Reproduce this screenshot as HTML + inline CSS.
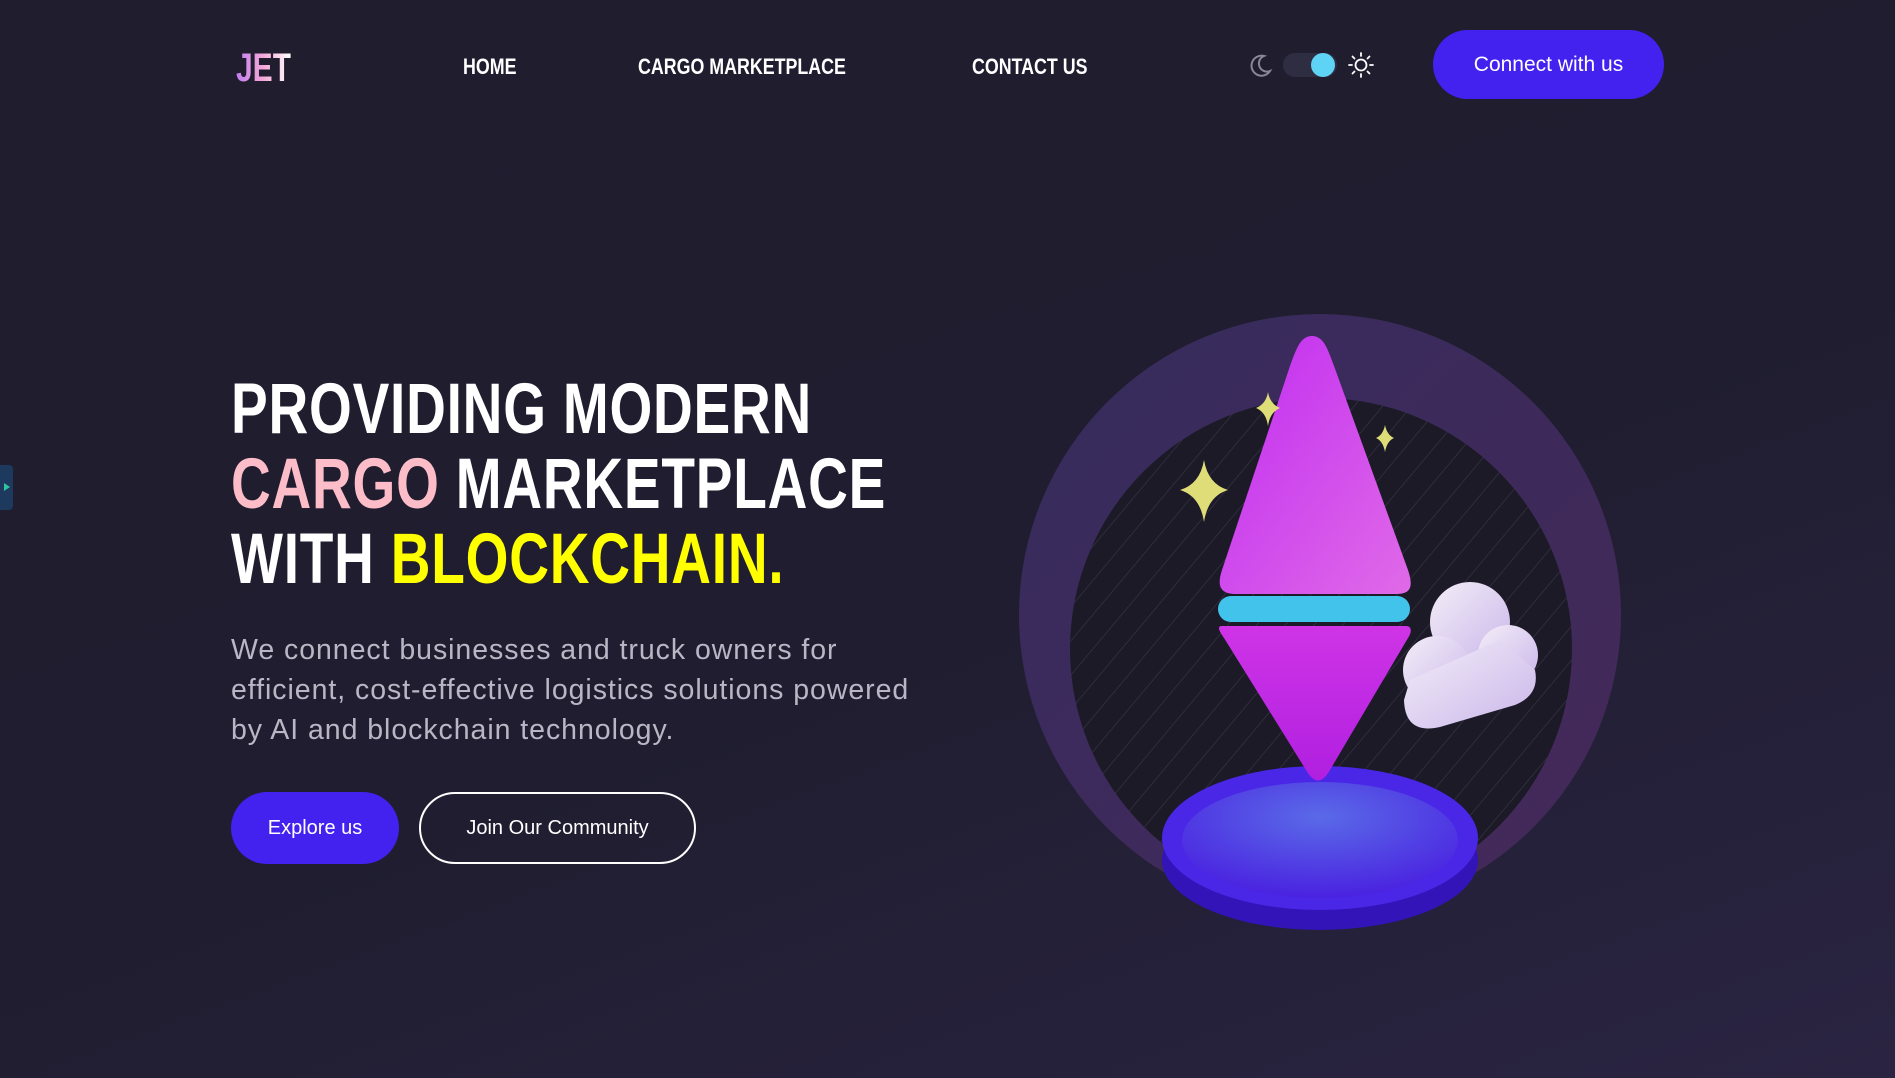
<!DOCTYPE html>
<html><head><meta charset="utf-8"><style>
*{margin:0;padding:0;box-sizing:border-box}
html,body{width:1895px;height:1078px;overflow:hidden}
body{background:linear-gradient(160deg,#1f1d2e 0%,#201d30 55%,#2a2442 100%);font-family:"Liberation Sans",sans-serif;position:relative;color:#fff}
.abs{position:absolute}
.logo{left:236px;top:46px;font-size:40px;font-weight:bold;transform:scaleX(.75);transform-origin:left;background:linear-gradient(90deg,#c07ef0,#f4a8d8,#fff);-webkit-background-clip:text;color:transparent}
.nav{top:54px;font-size:22px;font-weight:bold;transform:scaleX(.81);transform-origin:left;white-space:nowrap}
.btn1{left:1433px;top:30px;width:231px;height:69px;border-radius:35px;background:#4321ef;font-size:21px;display:flex;align-items:center;justify-content:center}
h1{position:absolute;left:231px;top:372px;font-size:71px;line-height:75px;font-weight:bold;white-space:nowrap;transform:scaleX(.775);transform-origin:left;letter-spacing:1px}
p{position:absolute;left:231px;top:630px;width:950px;font-size:28.5px;line-height:40px;color:#b9b6c6;white-space:nowrap;letter-spacing:.95px}
.b{position:absolute;top:792px;height:72px;border-radius:36px;font-size:20px;display:flex;align-items:center;justify-content:center}
</style></head><body>
<div class="abs logo">JET</div>
<div class="abs nav" style="left:463px">HOME</div>
<div class="abs nav" style="left:638px">CARGO MARKETPLACE</div>
<div class="abs nav" style="left:972px">CONTACT US</div>
<svg class="abs" style="left:1245px;top:50px" width="130" height="32" viewBox="1245 50 130 32">
<path d="M1264 56a10 10 0 1 0 6 15a8 8 0 0 1-6-15z" fill="none" stroke="#8a8894" stroke-width="2"/>
<rect x="1283" y="53" width="54" height="24" rx="12" fill="#2f2d42"/>
<circle cx="1323" cy="65" r="12" fill="#5fd3f3"/>
<circle cx="1361" cy="65" r="5.5" fill="none" stroke="#fff" stroke-width="1.8"/>
<g stroke="#fff" stroke-width="1.8" stroke-linecap="round"><path d="M1361 53v3M1361 74v3M1349 65h3M1370 65h3M1352.5 56.5l2 2M1367.5 71.5l2 2M1352.5 73.5l2-2M1367.5 58.5l2-2"/></g>
</svg>
<div class="abs btn1">Connect with us</div>
<div class="abs" style="left:0;top:465px;width:13px;height:45px;background:#1d3a5e;border-radius:0 4px 4px 0"><div style="position:absolute;left:4px;top:18px;border-left:6px solid #2ec4a0;border-top:4px solid transparent;border-bottom:4px solid transparent"></div></div>
<h1>PROVIDING MODERN<br><span style="color:#fdbdc8">CARGO</span> MARKETPLACE<br>WITH <span style="color:#ffff00">BLOCKCHAIN.</span></h1>
<p>We connect businesses and truck owners for<br>efficient, cost-effective logistics solutions powered<br>by AI and blockchain technology.</p>
<div class="b" style="left:231px;width:168px;background:#4321ef">Explore us</div>
<div class="b" style="left:419px;width:277px;border:2px solid #fff">Join Our Community</div>
<svg class="abs" style="left:1000px;top:280px" width="650" height="680" viewBox="1000 280 650 680">
<defs>
<linearGradient id="ring" x1="0" y1="0" x2="1" y2="1"><stop offset="0" stop-color="#3a2f66"/><stop offset="1" stop-color="#4a2a5e"/></linearGradient>
<pattern id="st" width="22" height="22" patternUnits="userSpaceOnUse" patternTransform="rotate(40)"><rect width="22" height="22" fill="#1c1a27"/><line x1="0" y1="0" x2="0" y2="22" stroke="#3a3848" stroke-width="1.2"/></pattern>
<linearGradient id="up" x1="0" y1="0" x2="1" y2="1"><stop offset="0" stop-color="#c02cf0"/><stop offset="1" stop-color="#e06ae8"/></linearGradient>
<linearGradient id="dn" x1="0" y1="0" x2="0" y2="1"><stop offset="0" stop-color="#cf34e6"/><stop offset="1" stop-color="#b020e0"/></linearGradient>
<radialGradient id="bs" cx=".5" cy=".3" r=".7"><stop offset="0" stop-color="#5a6ae8"/><stop offset="1" stop-color="#4a22e0"/></radialGradient>
<linearGradient id="cl" x1="0" y1="0" x2="1" y2="1"><stop offset="0" stop-color="#f4eef8"/><stop offset="1" stop-color="#c9b6ea"/></linearGradient>
</defs>
<circle cx="1320" cy="615" r="301" fill="url(#ring)" opacity=".85"/>
<circle cx="1321" cy="649" r="251" fill="url(#st)"/>
<ellipse cx="1320" cy="860" rx="158" ry="70" fill="#3214b8"/>
<ellipse cx="1320" cy="838" rx="158" ry="72" fill="#4a26e6"/>
<ellipse cx="1320" cy="840" rx="138" ry="58" fill="url(#bs)"/>
<path d="M1312 336C1300 336 1296 350 1290 366L1222 570C1216 588 1222 594 1236 594H1396C1410 594 1414 588 1408 570L1334 366C1328 350 1324 336 1312 336Z" fill="url(#up)"/>
<rect x="1218" y="596" width="192" height="26" rx="13" fill="#42c3ec"/>
<path d="M1222 626H1406C1412 626 1412 632 1408 638L1330 770C1322 784 1314 784 1306 770L1224 638C1220 632 1216 626 1222 626Z" fill="url(#dn)"/>
<g fill="url(#cl)">
<circle cx="1470" cy="622" r="40"/>
<circle cx="1508" cy="655" r="30"/>
<circle cx="1437" cy="670" r="34"/>
<path d="M1410 680L1500 640L1535 670Q1540 695 1515 705L1440 727Q1405 735 1404 700Z"/>
</g>
<g fill="#dedd78">
<path d="M1204 460q4 24 24 30q-20 6-24 32q-4-26-24-32q20-6 24-30z"/>
<path d="M1268 392q2 12 12 16q-10 4-12 18q-2-14-12-18q10-4 12-16z"/>
<path d="M1385 425q2 10 9 13q-7 3-9 14q-2-11-9-14q7-3 9-13z"/>
</g>
</svg>
</body></html>
